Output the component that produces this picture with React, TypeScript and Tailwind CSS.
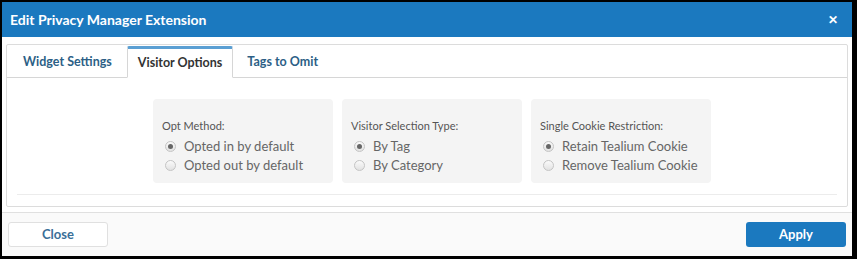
export default function App() {
  const groups = [
    { label: "Opt Method:", options: ["Opted in by default", "Opted out by default"] },
    { label: "Visitor Selection Type:", options: ["By Tag", "By Category"] },
    { label: "Single Cookie Restriction:", options: ["Retain Tealium Cookie", "Remove Tealium Cookie"] },
  ];

  return (
    <div
      className="w-[857px] h-[259px] bg-black pl-[2px] pt-[2px] pr-[5px] pb-[3px]"
      style={{ fontFamily: "Lato, 'Open Sans', sans-serif" }}
    >
      <div className="w-full h-full bg-white flex flex-col">
        {/* Header */}
        <div className="h-[35px] bg-[#1b79bf] flex items-center justify-between pl-[8px] pr-[14px] shrink-0">
          <span className="text-white text-[14px] font-bold">Edit Privacy Manager Extension</span>
          <span className="text-white text-[12px] font-bold leading-none">✕</span>
        </div>

        {/* Body */}
        <div className="flex-1 px-[4px] pt-[7px] pb-[5px]">
          <div className="h-full border border-[#dcdcdc] rounded-[2px] flex flex-col">
            {/* Tabs */}
            <div className="flex items-end h-[33px] border-b border-[#d6d6d6] pl-[4px] shrink-0">
              <div className="px-[12px] h-[29px] flex items-center text-[12.5px] font-bold text-[#2c5f86]">
                Widget Settings
              </div>
              <div className="ml-[3px] px-[10px] h-[32px] -mb-px flex items-center text-[12.5px] font-bold text-[#333] bg-white border border-[#d6d6d6] border-b-white border-t-[3px] border-t-[#5b9fd3] rounded-t-[2px]">
                Visitor Options
              </div>
              <div className="px-[14px] h-[29px] flex items-center text-[12.5px] font-bold text-[#2c5f86]">
                Tags to Omit
              </div>
            </div>

            {/* Cards */}
            <div className="flex justify-center gap-[9px] pt-[21px] ml-[10px]">
              {groups.map((g) => (
                <div key={g.label} className="w-[180px] h-[84px] bg-[#f4f4f4] rounded-[4px] pl-[9px] pt-[20px]">
                  <div className="text-[11px] text-[#555] leading-[14px] mb-[4px]">{g.label}</div>
                  {g.options.map((o, i) => (
                    <div key={o} className="flex items-center h-[19px] pl-[3px]">
                      <span className="w-[11px] h-[11px] rounded-full border border-[#c4c4c4] bg-gradient-to-b from-[#fafafa] to-[#e2e2e2] flex items-center justify-center">
                        {i === 0 && <span className="w-[5px] h-[5px] rounded-full bg-[#666]" />}
                      </span>
                      <span className="ml-[8px] text-[13px] text-[#666]">{o}</span>
                    </div>
                  ))}
                </div>
              ))}
            </div>

            <div className="mx-[10px] mt-[11px] border-t border-[#ececec]" />
          </div>
        </div>

        {/* Footer */}
        <div className="h-[44px] border-t border-[#e0e0e0] bg-[#fafafa] flex items-center justify-between px-[6px] shrink-0">
          <button className="w-[100px] h-[25px] bg-white border border-[#e0e0e0] rounded-[3px] text-[13px] font-bold text-[#3a6f98]">
            Close
          </button>
          <button className="w-[100px] h-[25px] bg-[#1b79bf] rounded-[3px] text-[13px] font-bold text-white">
            Apply
          </button>
        </div>
      </div>
    </div>
  );
}
